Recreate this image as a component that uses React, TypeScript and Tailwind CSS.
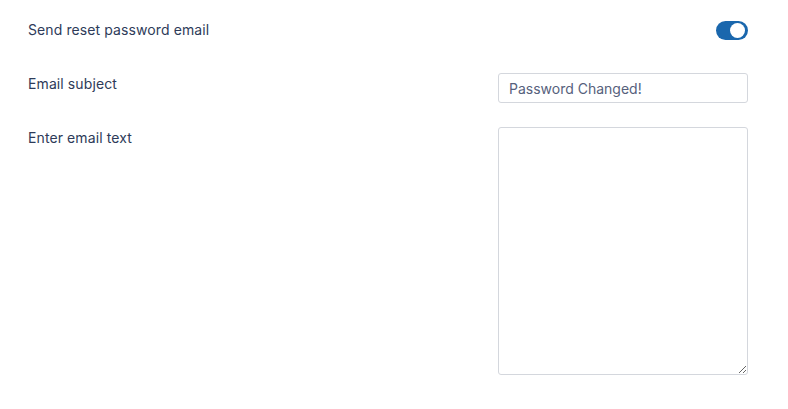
import React, { useState } from 'react';

export default function App() {
  const [sendEmail, setSendEmail] = useState(true);
  const [subject, setSubject] = useState('Password Changed!');
  const [body, setBody] = useState('');

  return (
    <div className="w-[788px] h-[409px] bg-white pl-[28px] pr-[40px] pt-[20px] font-['Inter',sans-serif] text-[14px] text-[#2e3b59]">
      <div className="flex items-center justify-between h-[20px]">
        <span className="leading-[20px] tracking-[0.1px]">Send reset password email</span>
        <button
          type="button"
          onClick={() => setSendEmail(!sendEmail)}
          className={`relative w-[32px] h-[19px] rounded-full ${sendEmail ? 'bg-[#1a67ad]' : 'bg-gray-300'}`}
        >
          <span
            className={`absolute top-[2px] w-[15px] h-[15px] rounded-full bg-white ${sendEmail ? 'left-[14px]' : 'left-[2px]'}`}
          />
        </button>
      </div>

      <div className="flex justify-between mt-[33px]">
        <span className="leading-[20px] pt-[1px] tracking-[0.1px]">Email subject</span>
        <input
          value={subject}
          onChange={(e) => setSubject(e.target.value)}
          className="w-[250px] h-[30px] border border-[#d4d7dd] rounded-[3px] px-[10px] text-[14px] text-[#56617c] outline-none"
        />
      </div>

      <div className="flex justify-between mt-[24px]">
        <span className="leading-[20px] pt-[1px] tracking-[0.1px]">Enter email text</span>
        <textarea
          value={body}
          onChange={(e) => setBody(e.target.value)}
          className="w-[250px] h-[248px] border border-[#d4d7dd] rounded-[3px] px-[10px] py-[6px] text-[14px] text-[#56617c] outline-none resize"
        />
      </div>
    </div>
  );
}
